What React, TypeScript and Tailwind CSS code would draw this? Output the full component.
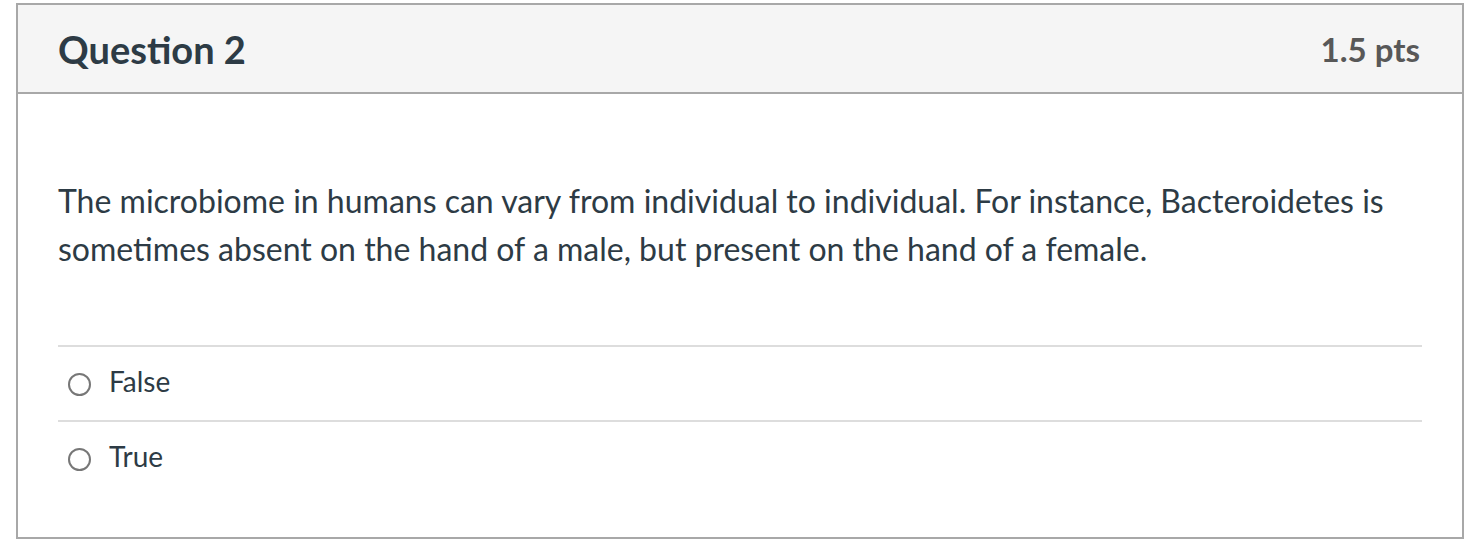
import React from 'react';

type Answer = {
  id: string;
  label: string;
};

const answers: Answer[] = [
  { id: 'a1', label: 'False' },
  { id: 'a2', label: 'True' },
];

export default function App() {
  return (
    <div className="min-h-[546px] bg-white pl-4 pt-[3px]" style={{ fontFamily: 'Lato, "Open Sans", sans-serif' }}>
      <div className="w-[1448px] border-2 border-[#a8a8a8] bg-white">
        <div className="flex h-[89px] items-center justify-between border-b-2 border-[#a8a8a8] bg-[#f5f5f5] pl-10 pr-[42px]">
          <h2 className="text-[38px] font-bold leading-none text-[#2d3b45]">Question 2</h2>
          <span className="mt-[2px] text-[33px] font-bold leading-none text-[#585858]">1.5 pts</span>
        </div>

        <div className="px-10 pt-[83px] pb-[42px]">
          <p className="text-[32px] leading-[48px] text-[#2d3b45]">
            The microbiome in humans can vary from individual to individual. For instance, Bacteroidetes is
            sometimes absent on the hand of a male, but present on the hand of a female.
          </p>

          <div className="mt-[72px]">
            {answers.map((answer) => (
              <label
                key={answer.id}
                className="flex h-[75px] items-center border-t-2 border-[#dddddd]"
              >
                <span className="ml-[10px] mt-[2px] h-[23px] w-[23px] rounded-full border-2 border-[#777777] bg-white" />
                <span className="ml-[18px] -mt-[6px] text-[28px] text-[#2d3b45]">{answer.label}</span>
              </label>
            ))}
          </div>
        </div>
      </div>
    </div>
  );
}
